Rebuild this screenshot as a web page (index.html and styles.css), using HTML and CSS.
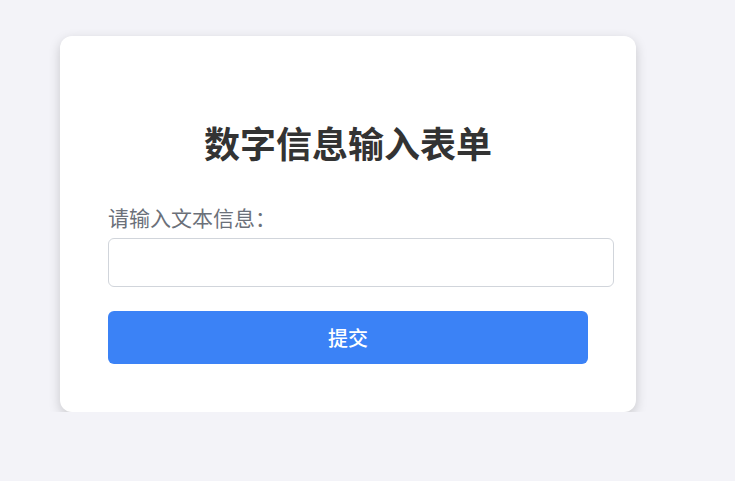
FILE: index.html
```html
<!DOCTYPE html>
<html lang="zh-CN">
<head>
<meta charset="utf-8">
<title>数字信息输入表单</title>
<link rel="stylesheet" href="styles.css">
</head>
<body>
<div class="card">
  <h1 class="title">数字信息输入表单</h1>
  <form class="form">
    <label class="label" for="info">请输入文本信息：</label>
    <input class="input" id="info" type="text">
    <button class="btn" type="button">提交</button>
  </form>
</div>
</body>
</html>
```

FILE: styles.css
```css
html, body {
  margin: 0;
  background: #f3f3f8;
  font-family: "Noto Sans CJK SC", "Noto Sans", sans-serif;
}
body {
  padding: 36px 0 0 60px;
}
.card {
  width: 480px;
  padding: 48px;
  background: #fff;
  border-radius: 12px;
  box-shadow: 0 4px 12px rgba(0, 0, 0, 0.18);
}
.title {
  margin: 32px 0 34px;
  font-size: 36px;
  line-height: 52px;
  font-weight: 700;
  color: #333;
  text-align: center;
}
.form {
  display: flex;
  flex-direction: column;
  align-items: flex-start;
}
.label {
  font-size: 21px;
  line-height: 30px;
  color: #6b7079;
  margin-bottom: 6px;
}
.input {
  box-sizing: content-box;
  width: 480px;
  padding: 12px;
  margin: 0;
  border: 1px solid #d1d5db;
  border-radius: 6px;
  font: 16px/23px "Noto Sans CJK SC", sans-serif;
  background: #fff;
}
.btn {
  margin-top: 24px;
  width: 480px;
  padding: 15px 0;
  border: 0;
  border-radius: 6px;
  background: #3b82f6;
  color: #fff;
  font: 500 20px/23px "Noto Sans CJK SC", sans-serif;
}
```
